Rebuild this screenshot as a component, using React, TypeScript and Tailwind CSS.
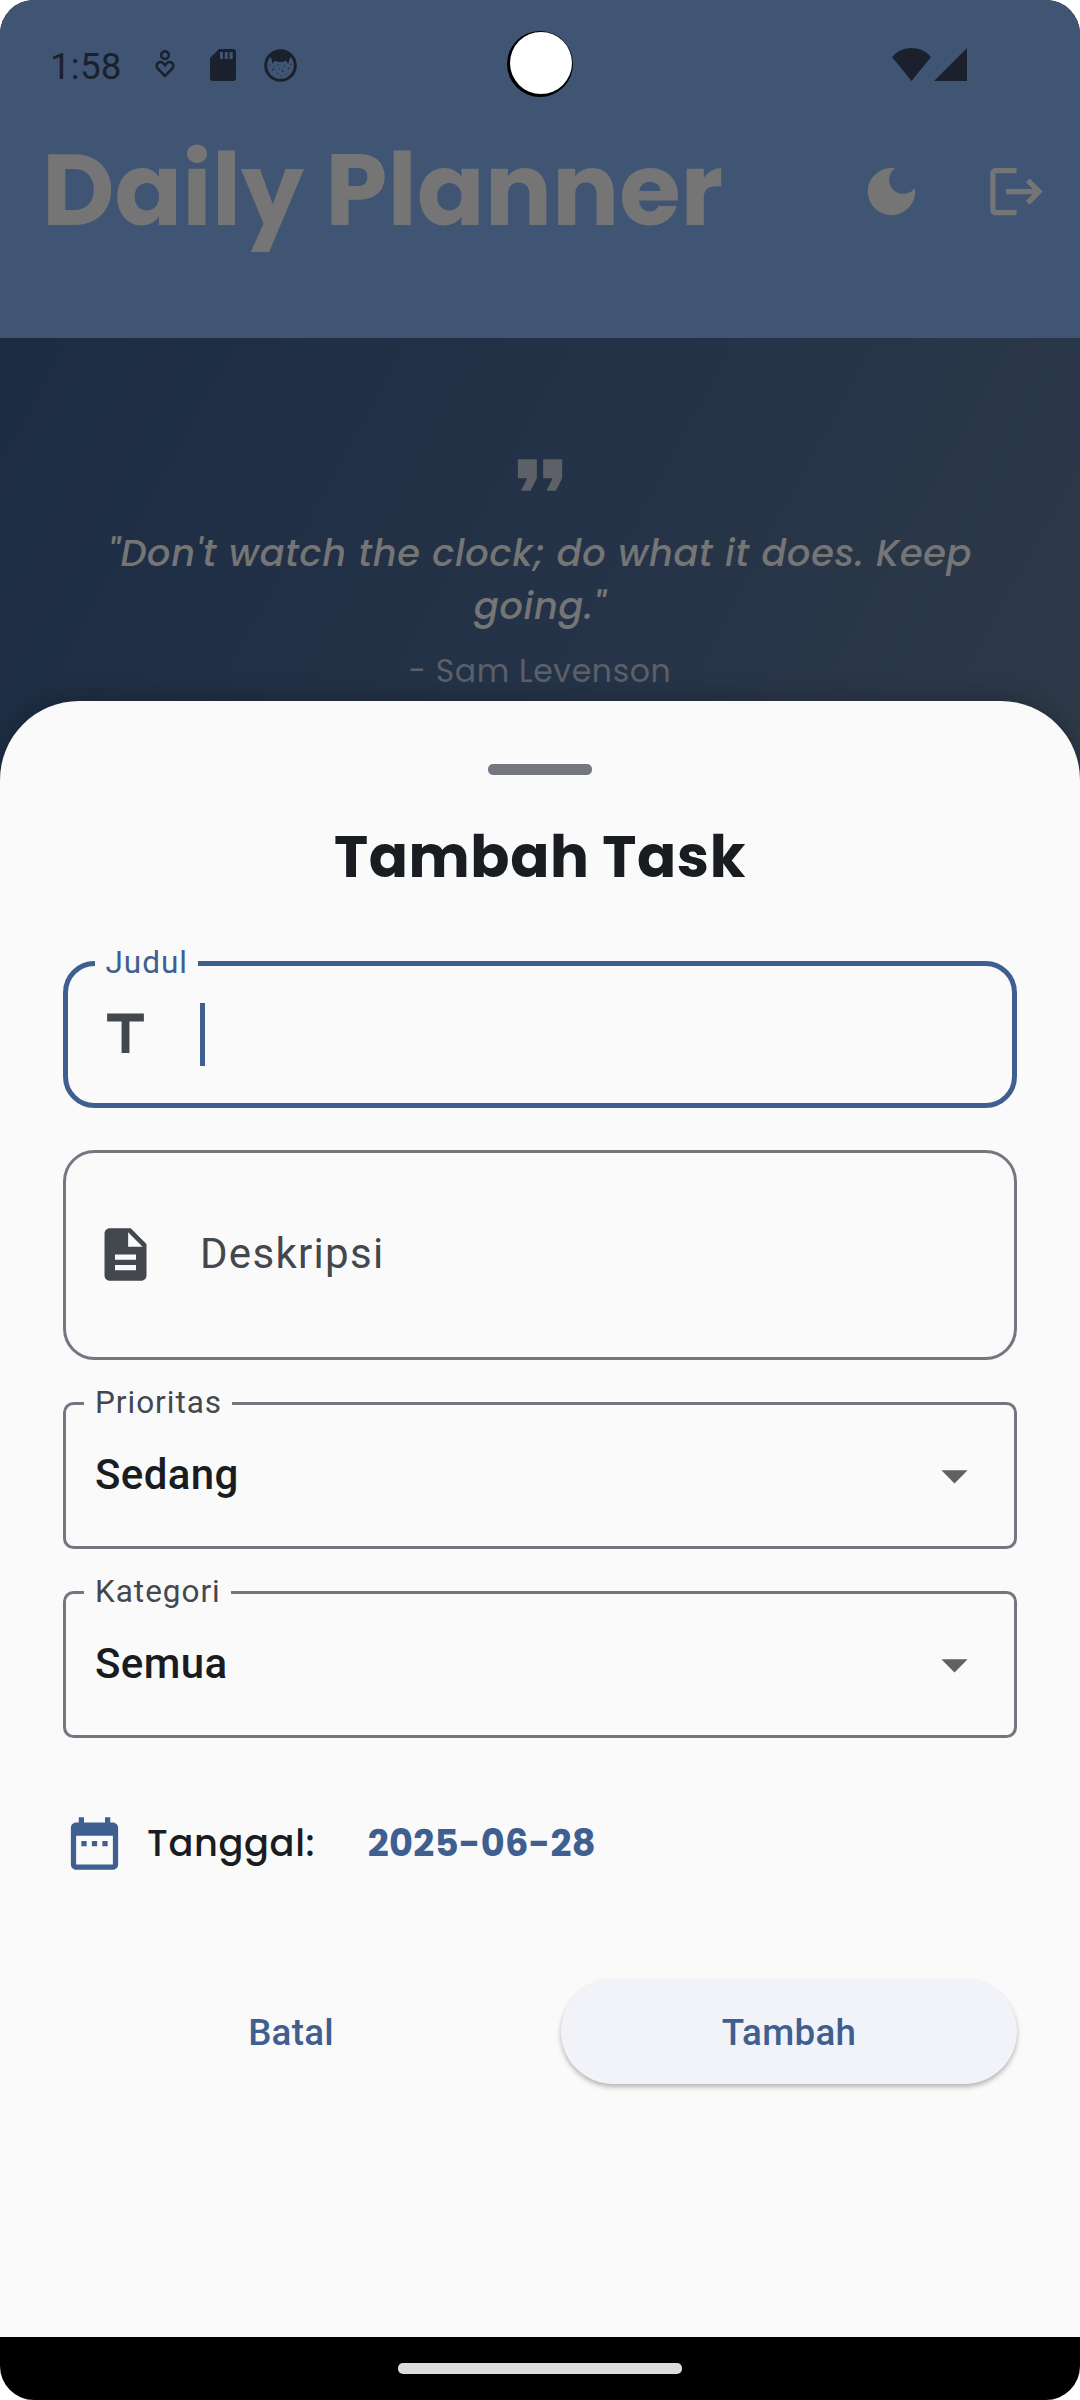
import type { ReactNode } from "react";

function Icon({ d, className }: { d: string; className: string }) {
  return (
    <svg viewBox="0 0 24 24" fill="currentColor" className={className} aria-hidden="true">
      <path d={d} />
    </svg>
  );
}

const MOON =
  "M12 3c-4.97 0-9 4.03-9 9s4.03 9 9 9 9-4.03 9-9c0-.46-.04-.92-.1-1.36-.98 1.37-2.58 2.26-4.4 2.26-2.98 0-5.4-2.42-5.4-5.4 0-1.81.89-3.42 2.26-4.4-.44-.06-.9-.1-1.36-.1z";
const LOGOUT =
  "M17 7l-1.41 1.41L18.17 11H8v2h10.17l-2.58 2.58L17 17l5-5zM4 5h8V3H4c-1.1 0-2 .9-2 2v14c0 1.1.9 2 2 2h8v-2H4V5z";
const QUOTE = "M6 17h3l2-4V7H5v6h3zm8 0h3l2-4V7h-6v6h3z";
const TITLE = "M5 4v3h5.5v12h3V7H19V4z";
const DOC =
  "M14 2H6c-1.1 0-1.99.9-1.99 2L4 20c0 1.1.89 2 1.99 2H18c1.1 0 2-.9 2-2V8l-6-6zm2 16H8v-2h8v2zm0-4H8v-2h8v2zm-3-5V3.5L18.5 9H13z";
const CARET = "M7 10l5 5 5-5z";
const CALENDAR =
  "M9 11H7v2h2v-2zm4 0h-2v2h2v-2zm4 0h-2v2h2v-2zm2-7h-1V2h-2v2H8V2H6v2H5c-1.11 0-1.99.9-1.99 2L3 20c0 1.1.89 2 2 2h14c1.1 0 2-.9 2-2V6c0-1.1-.9-2-2-2zm0 16H5V9h14v11z";

function StatusBar() {
  return (
    <div className="flex h-[128px] items-center pr-[113px] pl-[50px] text-[#1a212d]">
      <span className="w-[105px] pt-[5px] text-[36.75px] leading-[44px] tracking-[0.2px]">1:58</span>
      <svg viewBox="0 0 20 28" className="h-[28px] w-[20px]" fill="none" stroke="currentColor" strokeWidth="2.6" aria-hidden="true">
        <circle cx="10" cy="5.2" r="3.8" />
        <path d="M10 26 2.6 18.4a4.3 4.3 0 0 1 0-5.1c1.6-1.9 4.4-1.7 5.9.2L10 15.3l1.5-1.8c1.5-1.9 4.3-2.1 5.9-.2a4.3 4.3 0 0 1 0 5.1z" />
      </svg>
      <svg viewBox="0 0 26 32" className="ml-[35px] mt-[2px] h-[32px] w-[26px]" fill="currentColor" fillRule="evenodd" aria-hidden="true">
        <path d="M9 0h14a3 3 0 0 1 3 3v26a3 3 0 0 1-3 3H3a3 3 0 0 1-3-3V9zM10 3v7h3V3zM14.8 3v7h3V3zM19.5 3v7h3.2V3z" />
      </svg>
      <svg viewBox="0 0 33 33" className="ml-[28px] mt-[2px] h-[33px] w-[33px]" aria-hidden="true">
        <circle cx="16.5" cy="16.5" r="14.8" fill="none" stroke="currentColor" strokeWidth="3" />
        <path
          d="M5.5 7C11 1.500 22 1.500 27.500 7L25.5 10l-1.2 5-1.6-2.3-.9-1.2C19 13.500 14 13.500 11.2 11.500l-.9 1.2-1.6 2.3-1.2-5z"
          fill="currentColor"
        />
        <g fill="currentColor" opacity="0.7">
          <circle cx="9" cy="20.5" r="1" />
          <circle cx="14" cy="16" r=".8" />
          <circle cx="18.5" cy="22" r="1" />
          <circle cx="20.5" cy="17" r=".8" />
          <circle cx="24.5" cy="19.5" r="1" />
          <circle cx="13.5" cy="24.5" r=".8" />
          <circle cx="17" cy="27" r=".7" />
          <circle cx="22" cy="25" r=".7" />
          <circle cx="6" cy="16" r=".7" />
          <circle cx="27" cy="15.5" r=".7" />
          <circle cx="11" cy="18" r=".6" />
          <circle cx="15.5" cy="20" r=".6" />
        </g>
      </svg>
      <svg viewBox="0 0 75 33" className="ml-auto h-[33px] w-[75px]" fill="currentColor" aria-hidden="true">
        <path d="M0 9C10-3 29-3 39 9L19.5 33z" />
        <path d="M75 0v33H42z" />
      </svg>
    </div>
  );
}

function Header() {
  return (
    <header className="h-[338px] shrink-0 bg-[#405573]">
      <StatusBar />
      <div className="flex h-[127px] items-center pr-8 pl-[42px] text-[#757575]">
        <h1 className="pb-[3px] font-[Poppins,Inter,sans-serif] text-[99.75px] leading-[120px] font-bold whitespace-nowrap">
          Daily Planner
        </h1>
        <Icon d={MOON} className="ml-auto h-[63px] w-[63px]" />
        <Icon d={LOGOUT} className="ml-[62px] h-[63px] w-[63px]" />
      </div>
    </header>
  );
}

function Quote() {
  return (
    <section className="flex h-[583px] shrink-0 flex-col items-center bg-[linear-gradient(118.4deg,#1c2c43_0%,#253348_52%,#303b48_100%)] pt-[99px] text-center font-[Poppins,Inter,sans-serif]">
      <Icon d={QUOTE} className="h-[76px] w-[76px] text-[#5d6167]" />
      <p className="mt-[14px] text-[36.75px] leading-[53px] font-medium tracking-[0.656px] whitespace-nowrap text-[#757575] italic">
        "Don't watch the clock; do what it does. Keep
        <br />
        going."
      </p>
      <p className="mt-[14px] text-[31.5px] leading-[48px] tracking-[0.656px] text-[#5c6068]">- Sam Levenson</p>
    </section>
  );
}

function SelectField({ label, value }: { label: string; value: string }) {
  return (
    <div className="relative mt-[42px] flex h-[147px] items-center justify-between rounded-[10.5px] border-[3px] border-[#74777f] pr-7 pl-[29px]">
      <span className="absolute top-[-21px] left-[18px] bg-[#fafafa] pr-[10px] pl-[11px] text-[31.5px] leading-[37px] tracking-[0.98px] text-[#43474e]">
        {label}
      </span>
      <span className="pb-[2px] text-[42px] leading-[50px] font-medium tracking-[0.39px] text-[#191c20]">{value}</span>
      <Icon d={CARET} className="h-[63px] w-[63px] text-[#616161]" />
    </div>
  );
}

function ActionButton({ children, className }: { children: ReactNode; className?: string }) {
  return (
    <button
      type="button"
      className={`h-[105px] flex-1 rounded-full pt-[2px] text-[36.75px] leading-[44px] font-medium tracking-[0.26px] text-[#3f5f90] ${className ?? ""}`}
    >
      {children}
    </button>
  );
}

function TaskSheet() {
  return (
    <div className="absolute inset-x-0 top-[701px] bottom-[63px] rounded-t-[79px] bg-[#fafafa] px-[63px] pt-[63px] shadow-[0_-2px_26px_rgba(0,0,0,0.24)]">
      <div className="mx-auto h-[11px] w-[104px] rounded-[5px] bg-[#74777f]" />
      <h2 className="mt-[38px] text-center font-[Poppins,Inter,sans-serif] text-[57.75px] leading-[87px] font-bold tracking-[0.6px] text-[#191c20]">
        Tambah Task
      </h2>

      <div className="relative mt-[61px] flex h-[147px] items-center rounded-[31.5px] border-[5px] border-[#3f5f90] pl-[26px]">
        <span className="absolute top-[-22px] left-[27px] bg-[#fafafa] px-[10.5px] text-[31.5px] leading-[37px] tracking-[0.98px] text-[#3f5f90]">
          Judul
        </span>
        <Icon d={TITLE} className="h-[63px] w-[63px] text-[#43474e]" />
        <div className="ml-[43px] h-[63px] w-[5px] bg-[#3f5f90]" />
      </div>

      <div className="mt-[42px] flex h-[210px] items-center rounded-[31.5px] border-[3px] border-[#74777f] pb-px pl-7">
        <Icon d={DOC} className="h-[63px] w-[63px] text-[#43474e]" />
        <span className="ml-[43px] pb-px text-[42px] leading-[50px] tracking-[1.31px] text-[#43474e]">Deskripsi</span>
      </div>

      <SelectField label="Prioritas" value="Sedang" />
      <SelectField label="Kategori" value="Semua" />

      <div className="mt-[42px] flex h-[126px] items-center font-[Poppins,Inter,sans-serif] text-[36.75px] leading-[52px]">
        <Icon d={CALENDAR} className="h-[63px] w-[63px] text-[#3f5f90]" />
        <span className="ml-[21px] font-medium tracking-[0.65px] text-[#191c20]">Tanggal:</span>
        <span className="ml-[52.5px] font-bold tracking-[0.37px] text-[#3f5f90]">2025-06-28</span>
      </div>

      <div className="mt-[73px] flex gap-[42px]">
        <ActionButton>Batal</ActionButton>
        <ActionButton className="bg-[#f2f3f9] shadow-[0_3px_5px_rgba(0,0,0,0.28)]">Tambah</ActionButton>
      </div>
    </div>
  );
}

export default function App() {
  return (
    <div className="h-[2400px] w-[1080px] bg-white">
      <div className="relative flex h-[2400px] flex-col overflow-hidden rounded-[34px] bg-black font-[Roboto,sans-serif]">
        <Header />
        <Quote />
        <TaskSheet />
        <div className="mt-auto flex h-[63px] items-center justify-center">
          <div className="h-[11px] w-[284px] rounded-[5px] bg-[#dcdcdc]" />
        </div>
        {/* Front camera cut-out */}
        <div className="absolute top-[31px] left-[507px] h-[66px] w-[66px] rounded-full bg-black">
          <div className="absolute top-px left-[3px] h-[62px] w-[62px] rounded-full bg-white" />
        </div>
      </div>
    </div>
  );
}
